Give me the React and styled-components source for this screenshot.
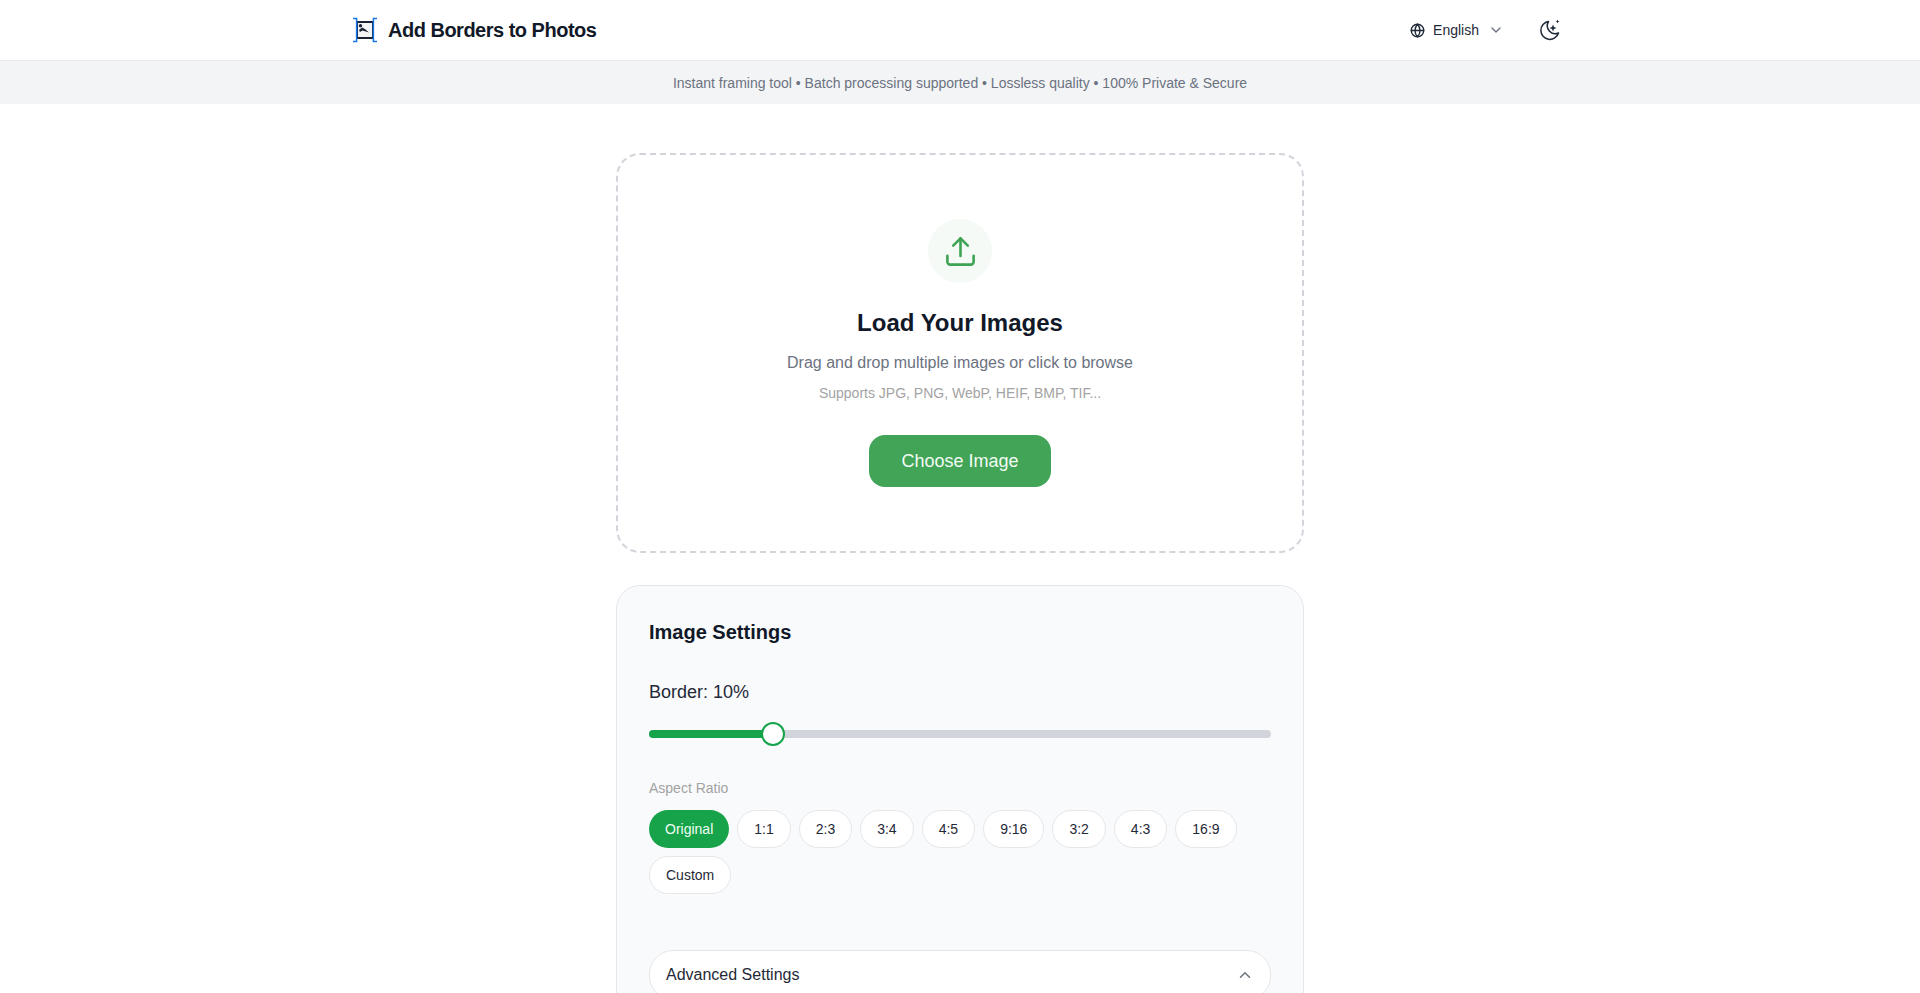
import React from "react";
import styled, { createGlobalStyle } from "styled-components";
import { ChevronDown, ChevronUp, Globe, Upload } from "lucide-react";

const GlobalStyle = createGlobalStyle`
  html, body {
    margin: 0;
    height: 100%;
    overflow: hidden;
    background: #fff;
    font-family: "Liberation Sans", Arial, sans-serif;
    color: #111827;
  }
  * { box-sizing: border-box; }
`;

const Header = styled.header`
  height: 61px;
  border-bottom: 1px solid #e5e7eb;
  background: #fff;
`;

const HeaderInner = styled.div`
  max-width: 1280px;
  height: 60px;
  margin: 0 auto;
  padding: 0 32px;
  display: flex;
  align-items: center;
  justify-content: space-between;
`;

const Brand = styled.div`
  display: flex;
  align-items: center;
  gap: 10px;
`;

const BrandName = styled.span`
  font-size: 20px;
  font-weight: 700;
  letter-spacing: -0.5px;
  color: #111827;
`;

const HeaderActions = styled.div`
  display: flex;
  align-items: center;
  gap: 34px;
  padding-right: 6px;
`;

const LangPicker = styled.div`
  display: flex;
  align-items: center;
  font-size: 14px;
  color: #1f2937;
  & > span { margin: 0 9px 0 8px; }
`;

const Tagline = styled.div`
  height: 43px;
  background: #f3f4f6;
  display: flex;
  align-items: center;
  justify-content: center;
  font-size: 14px;
  color: #6b7280;
`;

const Main = styled.main`
  width: 688px;
  margin: 0 auto;
  padding-top: 49px;
  display: flex;
  flex-direction: column;
  gap: 32px;
`;

const DropZone = styled.section`
  height: 400px;
  border: 2px dashed #d1d5db;
  border-radius: 24px;
  padding-top: 64px;
  display: flex;
  flex-direction: column;
  align-items: center;
`;

const IconCircle = styled.div`
  width: 64px;
  height: 64px;
  border-radius: 50%;
  background: #f5faf6;
  color: #3fa354;
  display: flex;
  align-items: center;
  justify-content: center;
`;

const DropTitle = styled.h2`
  margin: 24px 0 0;
  font-size: 24px;
  line-height: 32px;
  font-weight: 700;
`;

const DropText = styled.p`
  margin: 12px 0 0;
  font-size: 16px;
  line-height: 24px;
  color: #6b7280;
`;

const DropHint = styled.p`
  margin: 8px 0 0;
  font-size: 14px;
  line-height: 20px;
  color: #a3a3a3;
`;

const ChooseButton = styled.button`
  margin-top: 32px;
  width: 182px;
  height: 52px;
  border: none;
  border-radius: 16px;
  background: #41a456;
  color: #f3fbf4;
  font-family: inherit;
  font-size: 18px;
`;

const SettingsCard = styled.section`
  background: #f9fafb;
  border: 1px solid #e5e7eb;
  border-radius: 24px;
  padding: 32px;
  height: 600px;
`;

const CardTitle = styled.h3`
  margin: 0;
  font-size: 20px;
  line-height: 28px;
  font-weight: 700;
`;

const SliderLabel = styled.div`
  margin-top: 32px;
  font-size: 18px;
  line-height: 28px;
  color: #1f2937;
`;

const SliderTrack = styled.div`
  position: relative;
  margin-top: 24px;
  height: 8px;
  border-radius: 4px;
  background: #d1d5db;
`;

const SliderFill = styled.div`
  height: 100%;
  border-radius: 4px;
  background: #16a34a;
`;

const SliderThumb = styled.div`
  position: absolute;
  top: -8px;
  width: 24px;
  height: 24px;
  margin-left: -12px;
  border-radius: 50%;
  background: #fff;
  border: 2px solid #16a34a;
`;

const FieldLabel = styled.div`
  margin-top: 40px;
  font-size: 14px;
  line-height: 20px;
  color: #a3a3a3;
`;

const Pills = styled.div`
  margin-top: 12px;
  display: flex;
  flex-wrap: wrap;
  gap: 8px;
`;

const Pill = styled.button`
  height: 38px;
  padding: 0 16px;
  border-radius: 19px;
  border: ${(p) => (p.$active ? "none" : "1px solid #e5e7eb")};
  background: ${(p) => (p.$active ? "#16a34a" : "#fff")};
  color: ${(p) => (p.$active ? "#f0fdf4" : "#1f2937")};
  font-family: inherit;
  font-size: 14px;
`;

const Advanced = styled.div`
  margin-top: 56px;
  height: 50px;
  padding: 0 16px;
  border: 1px solid #e5e7eb;
  border-radius: 24px;
  background: #fff;
  display: flex;
  align-items: center;
  justify-content: space-between;
  font-size: 16px;
  color: #1f2937;
  & > svg { color: #6b7280; }
`;

const BrandLogo = () => (
  <svg width="26" height="26" viewBox="0 0 26 26" fill="none">
    <rect x="5" y="5" width="16" height="16" fill="#f3f4f6" stroke="#1a2233" strokeWidth="2" />
    <circle cx="8.5" cy="8.8" r="1.7" fill="#1a2233" />
    <path d="M7 13l3.2-2.6 3 1.8 3.8 3.4-4-1.4-2.6-.8-2.4 1.6z" fill="#1a2233" />
    <path d="M1 1.5h3.6v23H1M25 1.5h-3.6v23H25" stroke="#1976e8" strokeWidth="1.5" />
  </svg>
);

const MoonSparkles = () => (
  <svg width="24" height="24" viewBox="0 0 24 24" fill="none">
    <path d="M10.5 3.5a9 9 0 1 0 10 11.5a8 8 0 0 1-10-11.5z" stroke="#1f2937" strokeWidth="1.5" strokeLinejoin="round" />
    <path d="M15 6.5l1 2.5 2.5 1-2.5 1-1 2.5-1-2.5-2.500-1 2.500-1z" fill="#1f2937" />
    <path d="M19.500 1.500l.6 1.400 1.400.6-1.400.6-.6 1.400-.6-1.400-1.400-.6 1.400-.6z" fill="#1f2937" />
  </svg>
);

const RATIOS = ["Original", "1:1", "2:3", "3:4", "4:5", "9:16", "3:2", "4:3", "16:9", "Custom"];

export default function App() {
  return (
    <>
      <GlobalStyle />
      <Header>
        <HeaderInner>
          <Brand>
            <BrandLogo />
            <BrandName>Add Borders to Photos</BrandName>
          </Brand>
          <HeaderActions>
            <LangPicker>
              <Globe size={15} strokeWidth={2.2} />
              <span>English</span>
              <ChevronDown size={16} color="#6b7280" />
            </LangPicker>
            <MoonSparkles />
          </HeaderActions>
        </HeaderInner>
      </Header>
      <Tagline>Instant framing tool • Batch processing supported • Lossless quality • 100% Private &amp; Secure</Tagline>
      <Main>
        <DropZone>
          <IconCircle>
            <Upload size={35} strokeWidth={1.8} />
          </IconCircle>
          <DropTitle>Load Your Images</DropTitle>
          <DropText>Drag and drop multiple images or click to browse</DropText>
          <DropHint>Supports JPG, PNG, WebP, HEIF, BMP, TIF...</DropHint>
          <ChooseButton>Choose Image</ChooseButton>
        </DropZone>
        <SettingsCard>
          <CardTitle>Image Settings</CardTitle>
          <SliderLabel>Border: 10%</SliderLabel>
          <SliderTrack>
            <SliderFill style={{ width: "20%" }} />
            <SliderThumb style={{ left: "20%" }} />
          </SliderTrack>
          <FieldLabel>Aspect Ratio</FieldLabel>
          <Pills>
            {RATIOS.map((r) => (
              <Pill key={r} $active={r === "Original"}>{r}</Pill>
            ))}
          </Pills>
          <Advanced>
            Advanced Settings
            <ChevronUp size={18} />
          </Advanced>
        </SettingsCard>
      </Main>
    </>
  );
}
